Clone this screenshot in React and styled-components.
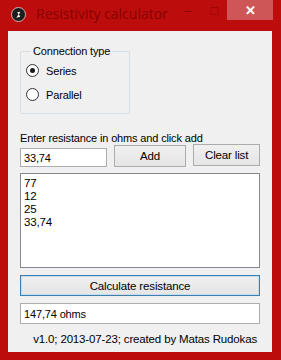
import React, { useState } from "react";
import styled, { createGlobalStyle } from "styled-components";

const GlobalStyle = createGlobalStyle`
  html, body {
    margin: 0;
    padding: 0;
    background: #bd0c0c;
  }
  body {
    font-family: "Liberation Sans", Arial, sans-serif;
    font-size: 11px;
    letter-spacing: -0.15px;
  }
`;

const Window = styled.div`
  width: 281px;
  height: 360px;
  background: #bd0c0c;
  display: flex;
  flex-direction: column;
  box-sizing: border-box;
  overflow: hidden;
`;

const TitleBar = styled.div`
  height: 31px;
  display: flex;
  align-items: flex-start;
  flex-shrink: 0;
  padding-right: 8px;
`;

const AppIcon = styled.div`
  width: 13px;
  height: 13px;
  margin: 7px 0 0 11px;
  border-radius: 50%;
  background: #1d1d1d;
  border: 1px solid #d8b0b0;
  display: flex;
  align-items: center;
  justify-content: center;
`;

const Title = styled.div`
  margin: 4px 0 0 10px;
  font-family: "Open Sans", "Noto Sans", sans-serif;
  font-size: 14px;
  color: #860303;
  letter-spacing: 0;
  line-height: 20px;
  flex: 1;
`;

const CaptionButton = styled.div`
  width: ${(p) => p.$w}px;
  height: 20px;
  display: flex;
  align-items: center;
  justify-content: center;
  color: ${(p) => (p.$close ? "#ffffff" : "#8a0404")};
  background: ${(p) => (p.$close ? "#cf5656" : "transparent")};
  font-size: 13px;
  font-weight: ${(p) => (p.$close ? "bold" : "normal")};
`;

const Client = styled.div`
  margin: 0 9px 8px 8px;
  flex: 1;
  background: #f0f0f0;
  padding: 0 12px;
  display: flex;
  flex-direction: column;
  color: #000;
`;

const GroupBox = styled.fieldset`
  margin: 14px 0 0 0;
  width: 110px;
  height: 69px;
  box-sizing: border-box;
  padding: 6px 0 0 5px;
  border: 1px solid #d5dfe5;
  border-radius: 2px;
  display: flex;
  flex-direction: column;
  gap: 11px;
`;

const Legend = styled.legend`
  padding: 0 2px;
  margin-left: 5px;
  font-size: 11px;
  line-height: 13px;
`;

const RadioRow = styled.label`
  display: flex;
  align-items: center;
  gap: 7px;
  height: 13px;
  font-size: 11px;
`;

const RadioCircle = styled.span`
  width: 11px;
  height: 11px;
  border-radius: 50%;
  border: 1px solid #333;
  background: #fff;
  display: flex;
  align-items: center;
  justify-content: center;
  &::after {
    content: "";
    width: 5px;
    height: 5px;
    border-radius: 50%;
    background: ${(p) => (p.$checked ? "#1a1a1a" : "transparent")};
  }
`;

const Caption = styled.div`
  margin-top: 18px;
  line-height: 13px;
`;

const InputRow = styled.div`
  display: flex;
  align-items: flex-start;
  margin-top: -1px;
  height: 23px;
`;

const TextBox = styled.div`
  box-sizing: border-box;
  width: ${(p) => (p.$w ? p.$w + "px" : "auto")};
  height: ${(p) => p.$h}px;
  margin-top: ${(p) => p.$mt || 0}px;
  border: 1px solid #abadb3;
  background: #fff;
  padding: 0 3px;
  display: flex;
  align-items: center;
`;

const Button = styled.div`
  box-sizing: border-box;
  width: ${(p) => (p.$w ? p.$w + "px" : "auto")};
  height: ${(p) => p.$h}px;
  margin-left: ${(p) => p.$ml || 0}px;
  margin-top: ${(p) => p.$mt || 0}px;
  border: 1px solid ${(p) => (p.$default ? "#3c7fb1" : "#acacac")};
  background: linear-gradient(#f0f0f0, #e5e5e5);
  box-shadow: ${(p) => (p.$default ? "inset 0 0 0 1px #c4dcef" : "none")};
  display: flex;
  align-items: center;
  justify-content: center;
  font-size: 11.5px;
`;

const ListBox = styled.div`
  box-sizing: border-box;
  margin-top: 6px;
  height: 95px;
  border: 1px solid #828790;
  background: #fff;
  padding: 3px 3px;
  display: flex;
  flex-direction: column;
`;

const ListItem = styled.div`
  font-size: 11.5px;
  line-height: 13px;
`;

const Footer = styled.div`
  margin-top: 9px;
  text-align: right;
  padding-right: 3px;
  font-size: 11.5px;
  line-height: 13px;
  white-space: nowrap;
`;

function App() {
  const [mode, setMode] = useState("series");
  const values = ["77", "12", "25", "33,74"];

  return (
    <Window>
      <GlobalStyle />
      <TitleBar>
        <AppIcon>
          <svg width="9" height="9" viewBox="0 0 10 10">
            <path d="M7 2 L3.5 2.5 L5 5 L2.5 8.5 L7 7.5 L5.5 5 Z" fill="#f2f2f2" />
          </svg>
        </AppIcon>
        <Title>Resistivity calculator</Title>
        <CaptionButton $w={27}>–</CaptionButton>
        <CaptionButton $w={26}>□</CaptionButton>
        <CaptionButton $w={46} $close>
          ✕
        </CaptionButton>
      </TitleBar>
      <Client>
        <GroupBox>
          <Legend>Connection type</Legend>
          <RadioRow onClick={() => setMode("series")}>
            <RadioCircle $checked={mode === "series"} />
            Series
          </RadioRow>
          <RadioRow onClick={() => setMode("parallel")}>
            <RadioCircle $checked={mode === "parallel"} />
            Parallel
          </RadioRow>
        </GroupBox>
        <Caption>Enter resistance in ohms and click add</Caption>
        <InputRow>
          <TextBox $w={87} $h={19} $mt={4}>33,74</TextBox>
          <Button $w={73} $h={22} $ml={7} $mt={1}>Add</Button>
          <Button $w={67} $h={22} $ml={7}>Clear list</Button>
        </InputRow>
        <ListBox>
          {values.map((v) => (
            <ListItem key={v}>{v}</ListItem>
          ))}
        </ListBox>
        <Button $h={21} $mt={7} $default>
          Calculate resistance
        </Button>
        <TextBox $h={21} $mt={7}>147,74 ohms</TextBox>
        <Footer>v1.0; 2013-07-23; created by Matas Rudokas</Footer>
      </Client>
    </Window>
  );
}

export default App;
